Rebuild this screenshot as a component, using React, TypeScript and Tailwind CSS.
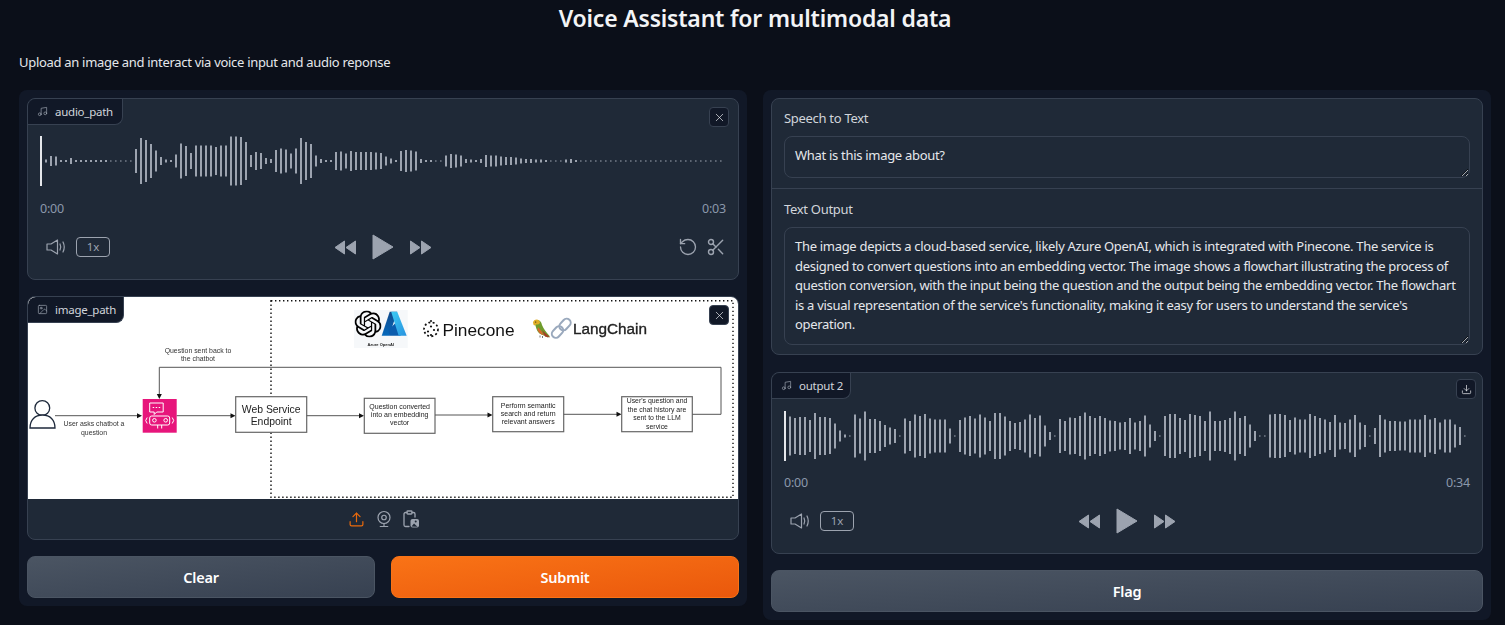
import React from "react";
import { Music, Image as ImageIcon, X, RotateCcw, Scissors, Upload, Webcam, Download } from "lucide-react";
import { SiOpenai } from "react-icons/si";

const FONT = "[font-family:'Noto_Sans','Liberation_Sans',sans-serif]";

const AUDIO_1 = [3,10,9,2,2,6,2,2,2,2,2,2,2,1,1,1,1,1,24,46,42,34,21,8,3,2,13,35,30,16,31,31,31,31,28,31,31,49,49,48,38,12,18,16,6,4,22,25,23,15,25,46,38,34,11,4,2,2,18,19,15,20,18,18,18,18,17,16,9,5,2,20,22,21,19,4,2,2,1,1,11,14,13,11,4,3,2,4,12,11,11,9,8,8,7,5,4,4,3,3,2,1,1,1,3,4,2,1,1,1,1,1,1,1,1,1,1,1,1,1,1,1,1,1,1,1,1,1,1,1,1,1,1,1,1,1];
const AUDIO_2 = [39,36,38,38,32,46,38,38,36,25,11,3,1,43,35,49,34,34,30,22,17,14,1,35,30,43,40,44,35,33,33,33,15,1,32,37,40,35,43,37,30,46,46,39,30,26,28,33,43,36,41,21,8,1,34,30,37,36,40,47,40,36,40,36,31,30,27,28,36,27,30,41,23,10,1,40,44,44,36,32,44,42,40,30,49,30,30,32,36,49,36,40,23,10,1,1,43,44,44,42,32,37,33,33,44,40,36,33,28,42,27,26,33,42,27,22,1,16,42,33,30,30,29,29,33,33,33,42,33,36,27,33,33,23,18,1];

function Wave({ bars, width }: { bars: number[]; width: number }) {
  return (
    <svg width={width} height={50} viewBox={`0 0 ${width} 50`} className="block">
      <rect x={0} y={0} width={2} height={50} fill="#e5e7eb" />
      {bars.map((h, i) => (
        <rect key={i} x={5 + i * 5} y={25 - h / 2} width={h <= 1 ? 1.6 : 2} height={h} fill="#9ca3af" />
      ))}
    </svg>
  );
}

function Tab({ icon, label, w }: { icon: React.ReactNode; label: string; w: string }) {
  return (
    <div className={`absolute left-0 top-0 h-[26px] ${w} flex items-center gap-[7px] pl-[9px] bg-[#111827] border-r border-b border-[#374151] rounded-br-lg rounded-tl-lg text-[11.5px] tracking-[-0.25px] whitespace-nowrap text-[#d1d5db]`}>
      {icon}
      <span>{label}</span>
    </div>
  );
}

function Corner({ children, cls }: { children: React.ReactNode; cls: string }) {
  return (
    <div className={`absolute ${cls} w-[20px] h-[20px] flex items-center justify-center rounded-[4px] bg-[#111827] border border-[#374151] text-[#e5e7eb]`}>
      {children}
    </div>
  );
}

function Volume() {
  return (
    <svg width="20" height="16" viewBox="0 0 20 16" fill="none" stroke="#9ca3af" strokeWidth="1.2" strokeLinejoin="round" strokeLinecap="round">
      <path d="M1 5H5L11.5 1V15L5 11H1Z" />
      <path d="M14 5Q15.5 8 14 11" />
      <path d="M17 3Q19.5 8 17 13" />
    </svg>
  );
}

function Center() {
  return (
    <div className="flex items-center gap-[16px]">
      <svg width="22" height="15" viewBox="0 0 22 15" fill="#9ca3af" stroke="#9ca3af" strokeWidth="1" strokeLinejoin="round"><path d="M10.5 1L1 7.5L10.5 14Z" /><path d="M21.5 1L12 7.5L21.5 14Z" /></svg>
      <svg width="22" height="26" viewBox="0 0 22 26" fill="#9ca3af" stroke="#9ca3af" strokeWidth="1" strokeLinejoin="round"><path d="M1 1L21 13L1 25Z" /></svg>
      <svg width="22" height="15" viewBox="0 0 22 15" fill="#9ca3af" stroke="#9ca3af" strokeWidth="1" strokeLinejoin="round"><path d="M0.5 1L10 7.5L0.5 14Z" /><path d="M11.5 1L21 7.5L11.5 14Z" /></svg>
    </div>
  );
}

function Controls({ right }: { right?: boolean }) {
  return (
    <div className="flex items-center h-[26px]">
      <div className="flex-1 flex items-center">
        <div className="ml-[6px] flex items-center gap-[10px]">
          <Volume />
          <div className="w-[34px] h-[20px] flex items-center justify-center rounded-[4px] border border-[#9ca3af] text-[11.5px] text-[#9ca3af]">1x</div>
        </div>
      </div>
      <Center />
      <div className="flex-1 flex items-center justify-end">
        <div className={right ? "flex items-center gap-[8px]" : "hidden"}>
          <RotateCcw size={20} strokeWidth={1.6} color="#9ca3af" />
          <Scissors size={20} strokeWidth={1.7} color="#9ca3af" />
        </div>
      </div>
    </div>
  );
}

function AudioCard({ bars, label, end, tabW, corner, right, top, timeGap }: { bars: number[]; label: string; end: string; tabW: string; corner: React.ReactNode; right?: boolean; top: string; timeGap: string }) {
  return (
    <div className={`relative h-[182px] rounded-lg border border-[#374151] bg-[#1f2937] px-[12px] ${top}`}>
      <Tab icon={<Music size={11} color="#9ca3af" strokeWidth={1.5} />} label={label} w={tabW} />
      {corner}
      <Wave bars={bars} width={684} />
      <div className={`flex justify-between ${timeGap} h-[20px] leading-[20px] text-[12.5px] tracking-[-0.2px] text-[#8b98ab]`}>
        <span>0:00</span>
        <span>{end}</span>
      </div>
      <div className="mt-[15px]"><Controls right={right} /></div>
    </div>
  );
}

function Box({ x, y, w, h, lines, size }: { x: number; y: number; w: number; h: number; lines: [string, number][]; size: number }) {
  return (
    <g>
      <rect x={x} y={y} width={w} height={h} fill="#fff" stroke="#666" strokeWidth={1.2} />
      {lines.map(([t, ty]) => (
        <text key={t} x={x + w / 2} y={ty} textAnchor="middle" fontSize={size} fill="#222" fontFamily="Liberation Sans">{t}</text>
      ))}
    </g>
  );
}

function Arrow({ x1, x2, y }: { x1: number; x2: number; y: number }) {
  return (
    <g>
      <line x1={x1} y1={y} x2={x2 - 4} y2={y} stroke="#555" strokeWidth={1} />
      <path d={`M${x2 - 5} ${y - 2.5}L${x2} ${y}L${x2 - 5} ${y + 2.5}Z`} fill="#111" />
    </g>
  );
}

function Diagram() {
  const lbl = { textAnchor: "middle" as const, fontSize: 6.9, fill: "#333", fontFamily: "Liberation Sans" };
  return (
    <svg width="710" height="202" viewBox="0 0 710 202" className="block blur-[0.3px]">
      <defs>
        <linearGradient id="az1" x1="0" y1="0" x2="0" y2="1"><stop offset="0" stopColor="#114a8b" /><stop offset="1" stopColor="#0669bc" /></linearGradient>
        <linearGradient id="az2" x1="0" y1="0" x2="1" y2="1"><stop offset="0" stopColor="#3ccbf4" /><stop offset="1" stopColor="#2892df" /></linearGradient>
      </defs>
      <rect width="710" height="202" fill="#fff" />
      <rect x="243" y="3.7" width="462" height="196.6" fill="none" stroke="#111" strokeWidth="1.4" strokeDasharray="1.4 2.6" />

      {/* Azure OpenAI */}
      <rect x="326" y="13" width="53.7" height="38" fill="#f6f8fa" />
      <SiOpenai x={326.5} y={13.5} size={27} color="#000" />
      <g transform="translate(353.7 14.7)">
        <path d="M8 0H15.5L7.5 24H0Z" fill="url(#az1)" />
        <path d="M7 18L17 8L19 24H7.5Z" fill="#0b5cad" />
        <path d="M15.5 0L25 24H17L9.5 0Z" fill="url(#az2)" />
      </g>
      <text x="352.7" y="48.5" textAnchor="middle" fontSize="4" fontWeight="700" fill="#222" fontFamily="Liberation Sans">Azure OpenAI</text>

      {/* Pinecone */}
      <g fill="#111">
        <circle cx="403" cy="32.3" r="7" fill="none" stroke="#111" strokeWidth="1.7" strokeDasharray="2 2.3" />
        <circle cx="403" cy="24" r="1" />
        <circle cx="403" cy="29.5" r="1.1" />
        <circle cx="406" cy="33" r="1.1" />
        <circle cx="400" cy="34.5" r="1.1" />
        <circle cx="403" cy="38" r="1.1" />
      </g>
      <text x="414.5" y="38.8" fontSize="17.3" fill="#111" fontFamily="Liberation Sans">Pinecone</text>

      {/* LangChain */}
      <g>
        <path d="M509 23Q513 23 514 28Q516 33 522 39.5L519.5 40.5L516 38.5Q510 37 508.5 32Q507.5 29 507 27Z" fill="#6f9c2c" />
        <path d="M505 25.5Q505.5 22.5 509 22.5Q512 23 512 26Q510.5 28 508 27.5L507 28.5Q505 28 505 25.5Z" fill="#e0ad26" />
        <path d="M510 30Q513 33 516 38.5Q511 37 509.5 32.5Z" fill="#d8682c" />
        <path d="M514 33L522 40.5L517 39.5Z" fill="#a83a26" />
        <path d="M512 38.5V40.5M514.5 39V41" stroke="#555" strokeWidth="0.8" />
        <circle cx="507.7" cy="25" r="0.6" fill="#111" />
      </g>
      <g fill="none" stroke="#9aa9bd" strokeWidth="2">
        <rect x="-6.5" y="-4" width="13" height="8" rx="4" transform="translate(529.5 35) rotate(-48)" />
        <rect x="-6.5" y="-4" width="13" height="8" rx="4" transform="translate(537 27.5) rotate(-48)" />
      </g>
      <text x="545" y="37.3" fontSize="15.3" stroke="#222" strokeWidth="0.35" fill="#222" fontFamily="Liberation Sans">LangChain</text>

      {/* Person */}
      <g fill="#fff" stroke="#1e293b" strokeWidth="1.3">
        <circle cx="14.3" cy="111" r="7.4" />
        <path d="M2 131C2 123 7 118 14.5 118C22 118 27 123 27 131Z" />
      </g>
      <Arrow x1={27} x2={114} y={118.7} />
      <text {...lbl} x="66" y="129">User asks chatbot a</text>
      <text {...lbl} x="66" y="137.5">question</text>

      {/* Robot */}
      <g transform="translate(114.7 102)">
        <rect width="34" height="33.7" fill="#e7157b" />
        <g fill="none" stroke="#fff" strokeWidth="1">
          <path d="M7 4H20.5V13H14L11.5 15.5V13H7Z" />
          <path d="M10 8.5H11.5M13 8.5H14.5M16 8.5H17.5" />
          <rect x="7" y="17" width="20" height="9" rx="2" />
          <circle cx="11.7" cy="21.3" r="1.8" />
          <circle cx="23" cy="21.3" r="1.8" />
          <path d="M4.5 18.5L3 21.5L4.5 24.5M29.5 18.5L31 21.5L29.5 24.5" />
          <path d="M15 26V29.5M19 26V29.5" />
        </g>
      </g>
      <Arrow x1={148.7} x2={207.5} y={118.7} />

      <Box x={207.7} y={99.7} w={71} h={35.6} size={10.4} lines={[["Web Service", 115.5], ["Endpoint", 128]]} />
      <Arrow x1={278.7} x2={336} y={118.7} />
      <Box x={336.3} y={101.3} w={70.7} h={35} size={7} lines={[["Question converted", 112], ["into an embedding", 120.3], ["vector", 128.3]]} />
      <Arrow x1={407} x2={464.5} y={118} />
      <Box x={464.7} y={99.7} w={71} h={35} size={7} lines={[["Perform semantic", 111], ["search and return", 119.2], ["relevant answers", 127.4]]} />
      <Arrow x1={535.7} x2={593.5} y={117.3} />
      <Box x={593.7} y={99.7} w={70.6} h={35} size={6.9} lines={[["User's question and", 106.3], ["the chat history are", 115], ["sent to the LLM", 123.3], ["service", 132]]} />

      <path d="M664.3 117.3H693V70.3H131.3V98" fill="none" stroke="#555" strokeWidth="1" />
      <path d="M128.8 97L131.3 102L133.8 97Z" fill="#111" />
      <text {...lbl} x="170" y="56">Question sent back to</text>
      <text {...lbl} x="170" y="64.3">the chatbot</text>
    </svg>
  );
}

function ClipImage() {
  return (
    <svg width="16" height="18" viewBox="0 0 16 18" fill="none" stroke="#9ca3af" strokeWidth="1.3" strokeLinecap="round" strokeLinejoin="round">
      <path d="M4 2.5H2.5A1.5 1.5 0 0 0 1 4V15A1.5 1.5 0 0 0 2.5 16.5H6" />
      <path d="M9 2.5H10.5A1.5 1.5 0 0 1 12 4V7" />
      <rect x="4" y="1" width="5" height="3" rx="0.8" />
      <rect x="7.5" y="9" width="8.5" height="8.5" rx="2" fill="#9ca3af" stroke="none" />
      <circle cx="12.7" cy="11.5" r="1" fill="#1f2937" stroke="none" />
      <path d="M8.5 16.5L11 13.5L14.5 16.8Z" fill="#1f2937" stroke="none" />
    </svg>
  );
}

function Btn({ children, primary, block }: { children: React.ReactNode; primary?: boolean; block?: boolean }) {
  return (
    <button className={`${block ? "w-full" : "flex-1"} h-[42px] pt-[2px] shrink-0 rounded-lg border text-[14.5px] font-semibold tracking-[-0.2px] text-white ${primary ? "bg-linear-to-br from-[#f97316] to-[#ea580c] border-[#f97316]" : "bg-linear-to-br from-[#4b5563] to-[#374151] border-[#4b5563]"}`}>
      {children}
    </button>
  );
}

function Field({ label, rows, value, h }: { label: string; rows: number; value: string; h: string }) {
  return (
    <div className="px-[12px]">
      <div className="h-[20px] leading-[20px] text-[13px] tracking-[-0.3px] text-[#d1d5db]">{label}</div>
      <textarea
        readOnly
        rows={rows}
        wrap="off"
        defaultValue={value}
        className={`block w-full ${h} mt-[8px] px-[10px] py-[9px] rounded-lg border border-[#374151] bg-[#1f2937] text-[13px] leading-[19.6px] tracking-[-0.3px] text-[#e5e7eb] outline-none resize-y overflow-hidden ${FONT}`}
      />
    </div>
  );
}

const OUTPUT = "The image depicts a cloud-based service, likely Azure OpenAI, which is integrated with Pinecone. The service is\ndesigned to convert questions into an embedding vector. The image shows a flowchart illustrating the process of\nquestion conversion, with the input being the question and the output being the embedding vector. The flowchart\nis a visual representation of the service's functionality, making it easy for users to understand the service's\noperation.";

export default function App() {
  return (
    <div className={`min-h-[625px] bg-[#0b0f19] pl-[19px] pr-[14px] text-[#f3f4f6] ${FONT}`}>
      <h1 className="h-[37px] leading-[37px] text-center text-[23px] font-semibold tracking-[-0.2px]">Voice Assistant for multimodal data</h1>
      <p className="mt-[14px] h-[22px] leading-[22px] text-[13px] tracking-[-0.3px] text-[#e5e7eb]">Upload an image and interact via voice input and audio reponse</p>
      <div className="mt-[17px] flex items-start gap-[16px]">
        <div className="flex-1 flex flex-col gap-[16px] p-[8px] rounded-lg bg-[#111827]">
          <AudioCard
            bars={AUDIO_1}
            label="audio_path"
            end="0:03"
            tabW="w-[95px]"
            top="pt-[37px]"
            timeGap="mt-[13px]"
            right
            corner={<Corner cls="top-[8px] right-[9px]"><X size={13} strokeWidth={1.3} /></Corner>}
          />
          <div className="relative h-[244px] rounded-lg border border-[#374151] bg-[#1f2937] overflow-hidden">
            <Diagram />
            <Tab icon={<ImageIcon size={11} color="#9ca3af" strokeWidth={1.5} />} label="image_path" w="w-[96px]" />
            <Corner cls="top-[8px] right-[9px]"><X size={13} strokeWidth={1.3} /></Corner>
            <div className="h-[40px] flex items-center justify-center gap-[10px]">
              <Upload size={17} color="#ea6a0c" strokeWidth={1.7} />
              <Webcam size={18} color="#9ca3af" strokeWidth={1.6} />
              <ClipImage />
            </div>
          </div>
          <div className="flex gap-[16px]">
            <Btn>Clear</Btn>
            <Btn primary>Submit</Btn>
          </div>
        </div>
        <div className="flex-1 flex flex-col gap-[16px] p-[8px] rounded-lg bg-[#111827]">
          <div className="h-[257px] mb-px rounded-lg border border-[#374151] bg-[#1f2937] pt-[9px]">
            <Field label="Speech to Text" rows={1} h="h-[42px]" value="What is this image about?" />
            <div className="h-px bg-[#374151] mt-[10px] mb-[10px]" />
            <Field label="Text Output" rows={5} h="h-[118px]" value={OUTPUT} />
          </div>
          <AudioCard
            bars={AUDIO_2}
            label="output 2"
            end="0:34"
            tabW="w-[79px]"
            top="pt-[38px]"
            timeGap="mt-[12px]"
            corner={<Corner cls="top-[6px] right-[6px]"><Download size={11} strokeWidth={1.6} /></Corner>}
          />
          <Btn block>Flag</Btn>
        </div>
      </div>
    </div>
  );
}
